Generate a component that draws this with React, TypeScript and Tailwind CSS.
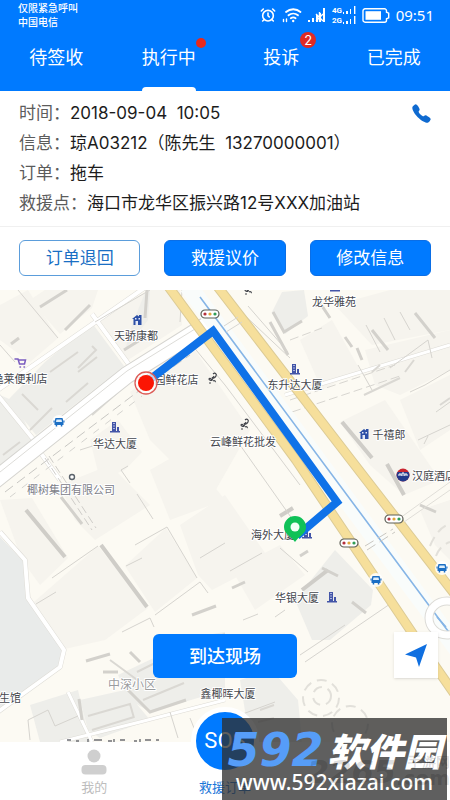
import { useState } from 'react';
import { AlarmClock } from 'lucide-react';
import { IoCall } from 'react-icons/io5';

const tabs = [
  { id: 'pending', label: '待签收' },
  { id: 'running', label: '执行中', dot: true },
  { id: 'complaint', label: '投诉', count: 2 },
  { id: 'done', label: '已完成' },
];

const order = [
  { label: '时间：', value: '2018-09-04\u00a0 10:05' },
  { label: '信息：', value: '琼A03212（陈先生\u00a0 13270000001）' },
  { label: '订单：', value: '拖车' },
  { label: '救援点：', value: '海口市龙华区振兴路12号XXX加油站' },
];

// map blocks, in map units
const blocks = [
  '0,305 28,290 58,338 30,362 0,340',
  '45,290 98,290 92,308 60,334 30,300',
  '98,318 150,290 180,290 182,325 128,360',
  '130,392 192,346 250,430 210,500 150,440',
  '90,440 118,420 142,452 125,470 100,480',
  '60,485 110,465 150,505 95,540 75,520',
  '0,500 32,498 68,558 40,585 22,560',
  '34,602 98,546 148,608 105,640 60,650',
  '125,566 166,528 197,578 155,612',
  '180,525 225,495 270,560 212,590 198,575',
  '150,470 185,450 225,500 170,520',
  '232,570 280,545 305,575 255,610',
  '300,340 332,320 360,370 322,390',
  '335,305 390,290 450,290 450,330 372,345',
  '365,350 450,330 450,370 400,395 375,385',
  '340,422 385,400 440,480 404,495 370,465',
  '400,400 450,375 450,430 420,450',
  '420,510 450,500 450,560 435,545',
];

const grayBlocks = [
  '45,362 92,323 124,366 36,435 8,400',
  '0,395 16,402 33,440 0,465',
  '295,600 335,550 373,590 371,605 330,640 312,640',
  '272,312 282,292 304,290 308,316 285,334',
  '146,290 150,290 148,320 125,350 132,325',
  '118,675 200,636 225,632 225,690 150,712 130,700',
  '80,700 125,690 150,720 100,738 88,730',
  '240,680 272,670 298,700 302,742 250,742',
  '30,705 78,690 90,742 40,742',
];

const shadows = [
  { w: 4, color: '#cfcdc8', d: 'M26 510 65 557M101 545 147 607M293 508 280 516M342 422 372 458M387 464 404 495M302 590 328 570' },
  { w: 3, color: '#d3d1cc', d: 'M40 307 67 290M65 330 90 305M11 344 19 338M245 582 232 588M300 556 308 551M322 568 338 576M352 602 366 613M273 312 284 332 302 321M270 322 288 355M147 290 145 318M124 350 140 340M61 497 82 524M192 615 216 606M86 661 110 654M103 672 118 672M79 699 82 720M128 690 150 712 186 700M130 652 140 662M318 300 330 318M345 337 352 347M357 348 362 360M372 330 388 350M415 313 435 338M420 505 436 512' },
  { w: 2, color: '#dad8d3', d: 'M30 430 52 408M78 372 97 357M50 372 78 352M66 402 88 383M92 346 96 350 78 368M92 415 118 392M20 442 3 455M38 410 22 394M137 672 185 648 225 634M143 700 184 683M88 716 130 704 134 718M92 730 134 717M110 660 140 682M200 660 222 650M215 668 240 655M260 710 274 705M258 722 274 718M380 365 372 372M405 372 414 360M364 395 400 378M440 405 450 398' },
  { w: 1, color: '#d6d4cf', d: 'M18 290 58 338M0 345 15 362M95 322 150 290M182 290 180 322M105 442 80 450M137 494 153 519M121 470 130 483M121 470 128 466M135 545 167 527 197 578M126 566 142 558M36 604 56 592M52 578 98 546M155 615 200 582 208 593M122 632 150 618 154 627M200 558 225 543M230 571 262 553M280 548 308 572M243 620 258 614M275 617 285 610M192 345 225 385 300 485M239 310 290 358M248 306 288 352M380 352 366 325M395 340 384 318M410 330 400 312M358 365 372 390M390 368 428 340 432 358M410 392 425 385 450 370M418 440 450 425M436 412 450 402M428 436 424 444M240 715 275 702M30 740 28 720 48 710 55 726 78 716M170 712 178 738M190 718 198 738M300 655 345 625M305 662 390 604M240 445 300 530' },
];

const streets = [
  { w: 4, d: 'M-5 392 150 284M-5 392 38 445M92 314 130 366M0 532 25 560 28 598 64 650 60 667-5 714M35 445 60 480' },
  { w: 3, d: 'M60 742 140 722 225 700M68 692 92 742M285 395 450 345' },
];

const labels = [
  { x: 334, y: 306, text: '龙华雅苑' },
  { x: 136, y: 340, text: '天骄康都' },
  { x: 20, y: 383, text: '逸莱便利店' },
  { x: 171, y: 384, text: '花园鲜花店' },
  { x: 295, y: 389, text: '东升达大厦' },
  { x: 115, y: 448, text: '华达大厦' },
  { x: 243, y: 446, text: '云峰鲜花批发' },
  { x: 389, y: 439, text: '千禧郎' },
  { x: 434, y: 480, text: '汉庭酒店' },
  { x: 273, y: 539, text: '海外大厦' },
  { x: 297, y: 602, text: '华银大厦' },
  { x: 228, y: 698, text: '鑫椰晖大厦' },
  { x: 10, y: 702, text: '生馆' },
];

function WifiIcon() {
  return (
    <svg viewBox="0 0 20 16" className="w-5 h-4" fill="none" stroke="currentColor" strokeWidth="1.8" strokeLinecap="round">
      <path d="M4 5a11 11 0 0 1 14.500 0M6.500 8.300a7.300 7.300 0 0 1 9.500 0M8.800 11.300a4 4 0 0 1 4.800 0" />
      <circle cx="11.200" cy="14" r="1.200" fill="currentColor" stroke="none" />
      <path d="M1.500 12.500v2M4.500 12v2.500" strokeWidth="1.400" />
    </svg>
  );
}

function SignalIcon() {
  return (
    <svg viewBox="0 0 18 16" className="w-[18px] h-4" fill="currentColor">
      <path d="M0 13h2v2H0zM4 11h2v4H4zM8 8h2v7H8zM12 6h1v9h-1zM15 1h2v14h-2z" />
      <path d="m8 7 7 7M15 7l-7 7M11.500 5v10" stroke="currentColor" strokeWidth="1.400" />
    </svg>
  );
}

function DualSignalIcon() {
  return (
    <svg viewBox="0 0 24 20" className="w-6 h-5" fill="currentColor">
      <text x="0" y="8" fontSize="8" fontWeight="700" fontFamily="Roboto, sans-serif">4G</text>
      <text x="0" y="18" fontSize="8" fontWeight="700" fontFamily="Roboto, sans-serif">2G</text>
      <path d="M11 7h1v2h-1zM14 6h2v3h-2zM18 4h1v5h-1zM22 1h1.400v8H22zM11 17h1v2h-1zM14 16h2v3h-2zM18 14h1v5h-1zM22 11h1.400v8H22z" />
    </svg>
  );
}

function BatteryIcon() {
  return (
    <svg viewBox="0 0 28 15" className="w-7 h-[15px]">
      <path d="M3 .8h19.500a2 2 0 0 1 2 2v1.400l2.200 1v4.600l-2.200 1v1.400a2 2 0 0 1-2 2H3a2 2 0 0 1-2-2V2.800a2 2 0 0 1 2-2Z" fill="none" stroke="currentColor" strokeWidth="1.400" />
      <path d="M3.500 3.200H19v8.600H3.500z" fill="currentColor" />
    </svg>
  );
}

function Building({ x, y }: { x: number; y: number }) {
  return (
    <g transform={`translate(${x} ${y})`}>
      <path d="M-3-5h4v9h-4zM2 0h2v4H2zM-5 4h10v1.500H-5z" fill="#4355a8" />
      <path d="M-2-3.500h2M-2-1h2M-2 1.500h2" stroke="#c9d0ee" strokeWidth=".8" />
    </g>
  );
}

function House({ x, y }: { x: number; y: number }) {
  return (
    <g transform={`translate(${x} ${y})`}>
      <path d="M-5-1 0-5 2-3.500V-5h2.500V5h-8V-1z" fill="#2c4fa6" />
      <path d="M-1.500 1h2.500v4h-2.500zM-2-2h1.500v1.500H-2zM1.500-2H3v1.500H1.500z" fill="#e4e9f7" />
    </g>
  );
}

function Bus({ x, y }: { x: number; y: number }) {
  return (
    <g transform={`translate(${x} ${y})`}>
      <circle r="7" fill="#fff" opacity=".85" />
      <path d="M-3.500-4h7l1 3.500v3.500h-1.200v1.500H1.800V3h-3.600v1.500h-1.500V3h-1.200v-3.500z" fill="#1c6fc4" />
      <path d="M-2.500-2.500h5L3 0h-6z" fill="#dcedfb" />
      <path d="M-5-1.500v2M5-1.500v2" stroke="#1c6fc4" strokeWidth="1" />
    </g>
  );
}

function TrafficLight({ x, y }: { x: number; y: number }) {
  return (
    <g transform={`translate(${x} ${y})`}>
      <rect x="-9" y="-4" width="18" height="8" rx="4" fill="#fff" stroke="#5c5f56" strokeWidth="1.200" />
      <circle cx="-5" r="1.600" fill="#b5303c" />
      <circle r="1.600" fill="#e0a53c" />
      <circle cx="5" r="1.600" fill="#2f9d55" />
    </g>
  );
}

function Flower({ x, y }: { x: number; y: number }) {
  return (
    <path
      transform={`translate(${x} ${y})`}
      d="M0-4c2-2 4 0 3 2S0 1-1-1M1-2-1 2M-1 2c-1-2-3-2-3-1s2 2 3 1ZM0 3c1-1 3 0 2 1M-4 5h2"
      fill="none"
      stroke="#44464c"
      strokeWidth="1.200"
    />
  );
}

function RescueMap() {
  return (
    <svg
      viewBox="0 290 450 452"
      preserveAspectRatio="xMidYMid slice"
      className="absolute inset-0 w-full h-full font-['Noto_Sans_CJK_SC',sans-serif]"
      role="img"
      aria-label="救援地图"
    >
      <rect x="-200" y="0" width="1000" height="1400" fill="#fcfaf3" />
      {blocks.map((points) => (
        <polygon key={points} points={points} fill="#f6f4ee" />
      ))}
      {grayBlocks.map((points) => (
        <polygon key={points} points={points} fill="#eeeeea" />
      ))}
      <path d="M0 537 25 563 28 600 64 653 60 667 0 710Z" fill="#e9ebea" />
      {streets.map((s) => (
        <g key={s.w} fill="none" strokeLinejoin="round">
          <path d={s.d} stroke="#dedcd6" strokeWidth={s.w + 1} />
          <path d={s.d} stroke="#fff" strokeWidth={s.w} />
        </g>
      ))}
      {shadows.map((s) => (
        <path key={s.w} d={s.d} fill="none" stroke={s.color} strokeWidth={s.w} />
      ))}

      {/* north-west avenue */}
      <path d="M-10 484 127 375 215 320" fill="none" stroke="#d5d4d0" strokeWidth="18" />
      <path d="M-10 484 127 375 215 320" fill="none" stroke="#fff" strokeWidth="16" />
      <path d="M-10 480 127 371 195 329" fill="none" stroke="#dddcd8" strokeWidth="1" />
      <path d="M5 492 140 390 190 355" fill="none" stroke="#c8c7c3" strokeWidth="1" strokeDasharray="10 5" />
      <path d="M10 497 142 396" fill="none" stroke="#d5d4d0" strokeWidth="1" strokeDasharray="7 8" />
      <path d="M45 458 92 530M49 456 96 528" fill="none" stroke="#cfcdc9" strokeWidth="1" strokeDasharray="8 4" />
      <path d="M290 340 322 328M290 400 395 365M292 412 400 376" stroke="#d8d6d1" strokeWidth="1" strokeDasharray="9 4" />

      {/* canal and the two main roads */}
      <path d="M188 286 445 632 480 680" fill="none" stroke="#f9fcfb" strokeWidth="18" />
      <path d="M200 297 445 627 470 660" fill="none" stroke="#86b5e6" strokeWidth="1.600" />
      <path d="M168 286 296 460 417 640 460 702" fill="none" stroke="#dccb96" strokeWidth="10" />
      <path d="M168 286 296 460 417 640 460 702" fill="none" stroke="#f6df9b" strokeWidth="8" />
      <path d="M214 282 351 460 460 601" fill="none" stroke="#dccb96" strokeWidth="10" />
      <path d="M214 282 351 460 460 601" fill="none" stroke="#f6df9b" strokeWidth="8" />
      <path d="M224 326 238 317M226 332 242 322" stroke="#d8d6d1" strokeWidth="1" />
      <path d="M365 546 393 529M367 550 395 532" stroke="#c9c7c2" strokeWidth="1" strokeDasharray="10 5" />
      <path d="M400 518 450 482M404 522 450 490" stroke="#e0ded8" strokeWidth="1" />

      {/* roundabouts */}
      <ellipse cx="447" cy="618" rx="18" ry="17" fill="none" stroke="#dcdbd7" strokeWidth="9" />
      <ellipse cx="447" cy="618" rx="18" ry="17" fill="none" stroke="#fff" strokeWidth="7" />
      <path d="M437 617 446 627" stroke="#86b5e6" strokeWidth="1.600" />
      <g fill="none" stroke="#e2e0da" strokeWidth="2" strokeDasharray="10 6">
        <circle cx="321" cy="698" r="18" />
        <circle cx="350" cy="724" r="18" />
        <circle cx="322" cy="696" r="9" />
        <path d="M430 546c5-12 12-20 20-22M436 556c3-8 8-12 14-14" />
      </g>

      <path d="M67 740h4M76 741h3M88 739v3M94 740h8M108 741h4M114 739v3M120 740h5M134 741h3M140 739v3M145 740h6M156 740h3" stroke="#6d6f74" strokeWidth="1.400" />

      <g fontSize="11" textAnchor="middle" fill="#45474d" stroke="#fff" strokeWidth="2" strokeLinejoin="round" paintOrder="stroke">
        {labels.map((l) => (
          <text key={l.text} x={l.x} y={l.y}>{l.text}</text>
        ))}
        <text x="71" y="494" fill="#7d8088">椰树集团有限公司</text>
        <text x="132" y="689" fontSize="12" fill="#9b9c9e">中深小区</text>
      </g>

      <circle cx="72" cy="477" r="2.500" fill="#fff" stroke="#5b636b" strokeWidth="1.400" />
      <Building x={115} y={427} />
      <Building x={295} y={369} />
      <Building x={307} y={533} />
      <Building x={332} y={597} />
      <path d="M330 290h10v1.500h-10z" fill="#4355a8" />
      <House x={137} y={320} />
      <House x={364} y={434} />
      <Bus x={59} y={422} />
      <Bus x={376} y={580} />
      <Bus x={442} y={568} />
      <TrafficLight x={210} y={314} />
      <TrafficLight x={394} y={519} />
      <TrafficLight x={349} y={543} />
      <Flower x={213} y={378} />
      <Flower x={245} y={424} />
      <Flower x={249} y={289} />
      <path d="M15 359h3l1.500 5h5l1-4h-7M20 367h.5M24 367h.5" fill="none" stroke="#7a5cc0" strokeWidth="1.500" strokeLinecap="round" />
      <circle cx="403" cy="475" r="6.500" fill="#c9242f" />
      <path d="M396.500 475a6.500 6.500 0 0 0 13 0l-1-3h-11z" fill="#233a8c" />
      <path d="M399 476v-2h2v2M402 476v-3h2v3M405 476v-2h2v2" stroke="#fff" strokeWidth="1" fill="none" />

      {/* route */}
      <path d="M148 381 213 331 337 502 297 536" fill="none" stroke="#0f72e8" strokeWidth="8" />
      <circle cx="146" cy="383" r="11" fill="#fff" fillOpacity=".7" stroke="#dc5b57" strokeWidth="1.300" />
      <circle cx="146" cy="383" r="8" fill="#fb1504" />
      <path d="M295 542c-4-6-11-8-11-15a11 11 0 0 1 22 0c0 7-7 9-11 15Z" fill="#10c157" />
      <circle cx="295" cy="527" r="4.500" fill="#f2fff6" />
    </svg>
  );
}

function Watermark() {
  return (
    <div className="absolute bottom-0 right-0 pr-[3px] pointer-events-none select-none whitespace-nowrap">
      <div className="w-[225px] h-[82px] bg-[#2f2f2f]/77 text-center">
        <div className="flex items-center justify-center h-[54px] pt-[10px] italic">
          <span className="text-[#569df8] font-bold text-[46px] leading-[44px] font-['DejaVu_Sans',sans-serif]">592</span>
          <span className="ml-1 text-white font-black text-[38px] leading-[44px] font-['Noto_Sans_CJK_SC',sans-serif]">软件园</span>
        </div>
        <div className="text-white font-medium text-[21px] leading-5 font-['Noto_Sans',sans-serif]">www.592xiazai.com</div>
      </div>
      <div className="absolute right-0 bottom-3 flex items-end text-black/15 font-bold leading-8 font-['DejaVu_Sans',sans-serif]">
        <span className="text-[32px] italic">2265</span>
        <span className="flex flex-col items-end">
          <span className="text-[14px] leading-3">手游网</span>
          <span className="text-[20px] leading-5">.com</span>
        </span>
      </div>
    </div>
  );
}

export default function App() {
  const [active, setActive] = useState('running');

  return (
    <div className="relative flex flex-col min-h-screen bg-white overflow-hidden font-['Inter','Noto_Sans_CJK_SC',sans-serif]">
      <header className="bg-[#007aff] text-white">
        <div className="flex items-center justify-between h-[30px] pl-[18px] pr-4">
          <div className="text-[10px] leading-[14px] font-medium">
            <p>仅限紧急呼叫</p>
            <p>中国电信</p>
          </div>
          <div className="flex items-center gap-[6px]">
            <AlarmClock className="w-4 h-4" strokeWidth={2.4} />
            <WifiIcon />
            <SignalIcon />
            <DualSignalIcon />
            <BatteryIcon />
            <span className="text-[15px] leading-5 font-['Noto_Sans',sans-serif]">09:51</span>
          </div>
        </div>
        <nav className="grid grid-cols-4 h-[61px]">
          {tabs.map((tab) => (
            <button key={tab.id} onClick={() => setActive(tab.id)} className="relative flex justify-center text-[18px] leading-[56px]">
              <span className="relative">
                {tab.label}
                {tab.dot && <span className="absolute top-2 -right-[10px] w-[10px] h-[10px] rounded-full bg-[#e8291c]" />}
                {tab.count && (
                  <span className="absolute top-[2px] -right-[17px] w-4 h-4 rounded-full bg-[#e02a24] text-[13px] leading-4 text-center">
                    {tab.count}
                  </span>
                )}
              </span>
              {active === tab.id && <span className="absolute bottom-0 w-[54px] h-1 bg-white rounded-t-sm" />}
            </button>
          ))}
        </nav>
      </header>

      <section className="relative px-[19px] pt-[7px] pb-2 border-b border-[#f0f0f0]">
        <dl>
          {order.map((row) => (
            <div key={row.label} className="flex text-[17px] leading-[30px] whitespace-nowrap">
              <dt className="text-[#5c5c5c]">{row.label}</dt>
              <dd className="text-[#1c1c1c]">{row.value}</dd>
            </div>
          ))}
        </dl>
        <a href="tel:13270000001" aria-label="拨打电话" className="absolute top-3 right-[18px] text-[#0f6ad0]">
          <IoCall size={21} />
        </a>
      </section>

      <section className="grid grid-cols-3 gap-6 px-[19px] pt-[13px] pb-[14px] text-[17px] leading-[34px]">
        <button className="rounded-md border border-[#5b9ddb] text-[#1a6fc4]">订单退回</button>
        <button className="rounded-md border border-[#0a6ee6] bg-[#007aff] text-white">救援议价</button>
        <button className="rounded-md border border-[#0a6ee6] bg-[#007aff] text-white">修改信息</button>
      </section>

      <main className="relative flex-1 min-h-[300px] overflow-hidden">
        <RescueMap />
        <button className="absolute bottom-16 left-1/2 -translate-x-1/2 w-36 h-11 rounded-md bg-[#007aff] text-white text-[18px] font-medium">
          到达现场
        </button>
        <button aria-label="定位" className="absolute bottom-16 right-3 flex items-center justify-center w-11 h-[46px] bg-white shadow-sm">
          <svg viewBox="0 0 24 24" className="w-6 h-6" fill="#0f6fe0">
            <path d="M23 1 1 11.500l11 3L15 24z" />
          </svg>
        </button>
      </main>

      <nav className="relative grid grid-cols-3 grid-rows-1 h-[58px] px-[29px] bg-white text-[13px] leading-4">
        <button className="flex flex-col items-center justify-end pb-[5px] text-[#bdbdbd]">
          <svg viewBox="0 0 26 26" className="w-[26px] h-[26px] mb-1" fill="#cfcfcf">
            <circle cx="13" cy="7" r="6.500" />
            <rect x=".5" y="16" width="25" height="9.500" rx="4" />
          </svg>
          我的
        </button>
        <button className="flex flex-col items-center justify-end pb-[5px] text-[#1a76d8]">
          <span className="w-[68px] h-[68px] mb-1 shrink-0 rounded-full border-[5px] border-white bg-[#007aff] text-white text-[22px] leading-[58px] font-['Roboto',sans-serif]">
            SOS
          </span>
          救援订单
        </button>
      </nav>

      <Watermark />
    </div>
  );
}
